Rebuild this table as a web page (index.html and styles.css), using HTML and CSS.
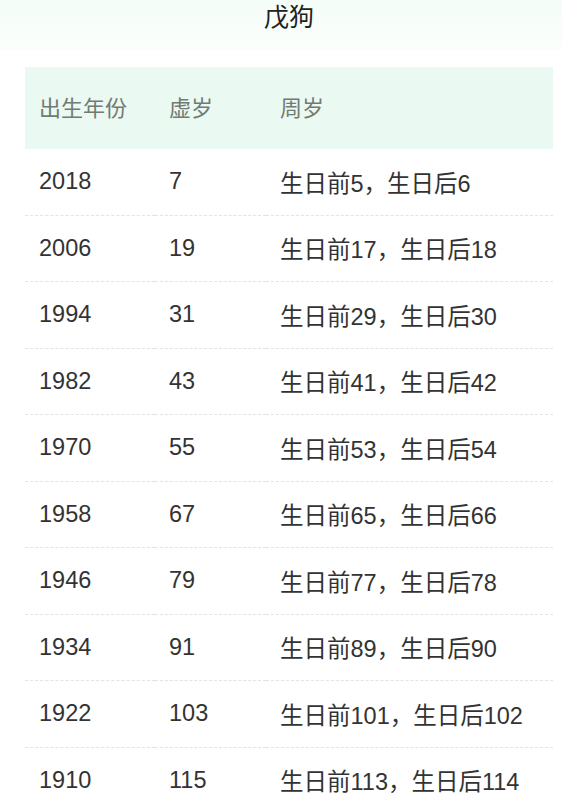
FILE: index.html
```html
<!DOCTYPE html>
<html lang="zh-CN">
<head>
<meta charset="utf-8">
<title>戊狗</title>
<link rel="stylesheet" href="styles.css">
</head>
<body>
<header class="top">
  <h1 class="title">戊狗</h1>
</header>
<main class="wrap">
  <table class="age-table">
    <colgroup><col class="c1"><col class="c2"><col class="c3"></colgroup>
    <thead>
      <tr><th>出生年份</th><th>虚岁</th><th>周岁</th></tr>
    </thead>
    <tbody>
      <tr><td>2018</td><td>7</td><td>生日前5，生日后6</td></tr>
      <tr><td>2006</td><td>19</td><td>生日前17，生日后18</td></tr>
      <tr><td>1994</td><td>31</td><td>生日前29，生日后30</td></tr>
      <tr><td>1982</td><td>43</td><td>生日前41，生日后42</td></tr>
      <tr><td>1970</td><td>55</td><td>生日前53，生日后54</td></tr>
      <tr><td>1958</td><td>67</td><td>生日前65，生日后66</td></tr>
      <tr><td>1946</td><td>79</td><td>生日前77，生日后78</td></tr>
      <tr><td>1934</td><td>91</td><td>生日前89，生日后90</td></tr>
      <tr><td>1922</td><td>103</td><td>生日前101，生日后102</td></tr>
      <tr><td>1910</td><td>115</td><td>生日前113，生日后114</td></tr>
    </tbody>
  </table>
</main>
</body>
</html>
```
FILE: styles.css
```css
html, body {
  margin: 0;
  padding: 0;
  background: #ffffff;
}
body {
  font-family: "Liberation Sans", "Noto Sans CJK SC", sans-serif;
  color: #333333;
}
.top {
  height: 50px;
  background: linear-gradient(to bottom, #f5fdf8 0%, #fbfefc 100%);
}
.wrap {
  width: 528px;
  margin: 17px 0 0 25px;
}
.top .title {
  margin: 0 0 0 25px;
  width: 528px;
  text-align: center;
  font-weight: normal;
  font-size: 25px;
  line-height: 35px;
  color: #222222;
}
.age-table {
  width: 100%;
  border-collapse: collapse;
  table-layout: fixed;
}
.age-table .c1 { width: 130px; }
.age-table .c2 { width: 111px; }
.age-table thead th {
  background: #eaf9f1;
  height: 82px;
  padding: 0 0 4px 14px;
  box-sizing: border-box;
  text-align: left;
  font-weight: normal;
  font-size: 22px;
  color: #737a74;
}
.age-table tbody td {
  height: 65.5px;
  padding: 0 0 0 14px;
  font-size: 23.5px;
  color: #333333;
  border-bottom: 1px dashed #e3e3e3;
  white-space: nowrap;
}
```
